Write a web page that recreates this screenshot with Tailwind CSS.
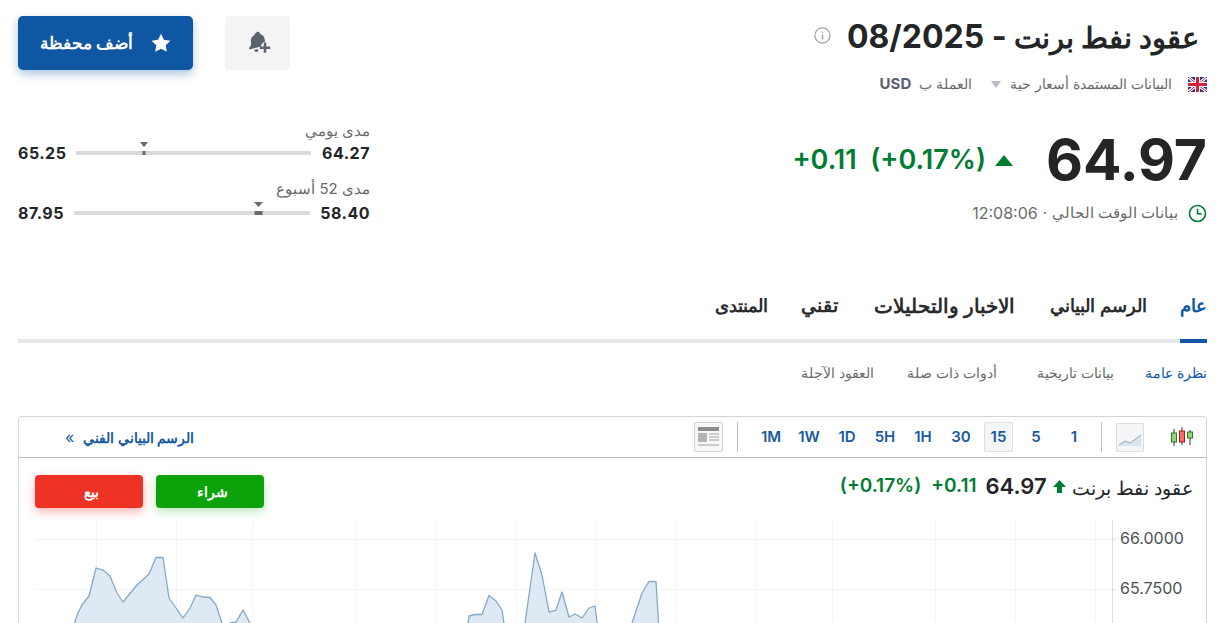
<!DOCTYPE html>
<html dir="rtl" lang="ar">
<head>
<meta charset="utf-8">
<script src="https://cdn.jsdelivr.net/npm/@tailwindcss/browser@4"></script>
</head>
<body class="bg-white">
<div class="h-[623px] overflow-hidden px-[16px] font-['Inter',sans-serif] text-[#232526]">

<div class="flex justify-between items-start pt-4 pr-[8px] pl-[2px]">
  <div class="flex flex-col items-start">
    <div class="flex items-center gap-[16px] h-[42px]">
      <h1 class="text-[32px] leading-[42px] font-bold whitespace-nowrap"><span class="text-[29px] font-bold">عقود نفط برنت</span> - 08/2025</h1>
      <svg class="w-[17px] h-[17px] mt-[-4px]" viewBox="0 0 17 17" fill="none" stroke="#9ca3af" stroke-width="1.2"><circle cx="8.5" cy="8.5" r="7.6"/><path d="M8.5 7.5v5M8.5 4.4v1.4" stroke-width="1.5"/></svg>
    </div>
    <div class="flex items-center mt-[17px] mr-[-8px] text-[14px] leading-[18px] text-[#6a6a6a] h-[18px]">
      <svg class="w-[19px] h-[15px]" viewBox="0 0 19 15"><rect width="19" height="15" fill="#27397c"/><path d="M0 0L19 15M19 0L0 15" stroke="#fff" stroke-width="3"/><path d="M0 0L19 15M19 0L0 15" stroke="#d4213d" stroke-width="1"/><path d="M9.5 0v15M0 7.5h19" stroke="#fff" stroke-width="5"/><path d="M9.5 0v15M0 7.5h19" stroke="#d4213d" stroke-width="3"/></svg>
      <span class="mr-[16px]">البيانات المستمدة أسعار حية</span>
      <svg class="w-[10px] h-[7px] mr-[9px]" viewBox="0 0 10 7"><path d="M0 0h10L5 7z" fill="#b8bcc4"/></svg>
      <span class="mr-[19px]">العملة ب</span>
      <span class="mr-[8px] font-bold text-[15px] text-[#5b616e]">USD</span>
    </div>
  </div>
  <div class="flex gap-[32px] flex-row">
    <div class="w-[65px] h-[54px] rounded-[4px] bg-[#f4f4f5] flex items-center justify-center">
      <svg class="w-[24px] h-[24px] ml-[3px]" viewBox="0 0 22 22" fill="#5b616e"><path d="M9.6 0.8c1-.3 1.9.3 2.2 1.2l.2.8c2.4.5 3.7 2.3 4.1 4.2l.6 2.6c-1.8.4-3.3 1.9-3.7 3.8l-.1.8-9.9 2.5c-.9.2-1.5-.8-.9-1.5 1.4-1.4 2-3 1.5-5.1C3 7.600 4.300 4.800 7 3.600l-.2-.7c.8-.9 1.800-1.700 2.800-2.100zM6.500 17.500l3.800-1c.3 1.100-.3 2.300-1.400 2.600-1.100.3-2.100-.4-2.400-1.600z"/><path d="M16.500 10.500v9.500M11.800 15.300h9.500" stroke="#5b616e" stroke-width="2.300" fill="none"/></svg>
    </div>
    <div class="w-[175px] h-[54px] rounded-[5px] bg-[#0f56a3] text-white flex items-center justify-center gap-[18px] shadow-[0_4px_10px_rgba(15,86,163,0.35)] text-[16.5px] font-bold">
      <svg class="w-[20px] h-[20px]" viewBox="0 0 20 20" fill="#fff"><path d="M10 .8l2.900 6 6.500.9-4.700 4.600 1.100 6.500L10 15.700l-5.800 3.100 1.100-6.500L.6 7.700l6.500-.9z"/></svg>
      <span>أضف محفظة</span>
    </div>
  </div>
</div>

<div class="flex justify-between items-start mt-[37px] pl-[2px]">
  <div class="flex flex-col items-start">
    <div class="flex items-center h-[60px] gap-[12px]">
      <span dir="ltr" class="text-[57px] leading-[60px] font-bold">64.97</span>
      <svg class="w-[18px] h-[11px] mr-[21px]" viewBox="0 0 18 11"><path d="M9 0l9 11H0z" fill="#007c32"/></svg>
      <span dir="ltr" class="text-[27px] leading-[30px] font-semibold text-[#007c32] whitespace-pre mr-[-3px]">+0.11  (+0.17%)</span>
    </div>
    <div class="flex items-center gap-[10px] mt-[13px] text-[14.5px] leading-[20px] text-[#6a6a6a]">
      <svg class="w-[19px] h-[19px]" viewBox="0 0 19 19" fill="none" stroke="#007c32" stroke-width="1.600"><circle cx="9.500" cy="9.500" r="8"/><path d="M9.500 4.800v5h4.200"/></svg>
      <div class="flex items-center gap-[5px]"><span>بيانات الوقت الحالي</span><span>·</span><span dir="ltr" class="text-[16px]">12:08:06</span></div>
    </div>
  </div>
  <div class="w-[352px] flex flex-col mt-[-8px] text-[16px]">
    <div class="text-[15px] leading-[18px] text-[#6a6a6a]">مدى يومي</div>
    <div class="flex items-center h-[22px] mt-[2px]">
      <span class="font-bold tracking-[0.5px] w-[48px]">64.27</span>
      <div class="relative w-[235px] h-[4px] bg-[#d9dadd] mr-[11px]">
        <svg class="absolute top-[-9px] left-[64px] w-[8px] h-[13px]" viewBox="0 0 8 13"><path d="M0 0h8L4 5z" fill="#6a6a6a"/><rect x="2.500" y="9" width="3" height="4" fill="#6a6a6a"/></svg>
      </div>
      <span class="font-bold tracking-[0.5px] mr-auto">65.25</span>
    </div>
    <div class="text-[15px] leading-[18px] text-[#6a6a6a] mt-[16px]">مدى 52 أسبوع</div>
    <div class="flex items-center h-[22px] mt-[4px]">
      <span class="font-bold tracking-[0.5px] w-[49px]">58.40</span>
      <div class="relative w-[236px] h-[4px] bg-[#d9dadd] mr-[11px]">
        <svg class="absolute top-[-9px] left-[180px] w-[9px] h-[13px]" viewBox="0 0 9 13"><path d="M0 0h9L4.500 5z" fill="#6a6a6a"/><rect x="0.500" y="9" width="8" height="4" fill="#6a6a6a"/></svg>
      </div>
      <span class="font-bold tracking-[0.5px] mr-auto">87.95</span>
    </div>
  </div>
</div>

<div class="mt-[59px] w-[1189px]">
  <div class="flex gap-[33px] h-[60px] border-b-4 border-[#e6e9eb] text-[18px] leading-[28px] font-semibold text-[#2a2c2e]">
    <div class="relative pt-[9px] text-[#0f56a3]">عام<div class="absolute bottom-[-4px] inset-x-0 h-[4px] bg-[#0f56a3]"></div></div>
    <div class="pt-[9px]">الرسم البياني</div>
    <div class="pt-[9px] mr-[2px] text-[20px]">الاخبار والتحليلات</div>
    <div class="pt-[9px] mr-[3px] text-[19px]">تقني</div>
    <div class="pt-[9px]">المنتدى</div>
  </div>
  <div class="flex mt-[18px] text-[14px] leading-[24px] text-[#6a6a6a]">
    <div class="text-[#0f56a3]">نظرة عامة</div>
    <div class="mr-[31px]">بيانات تاريخية</div>
    <div class="mr-[40px]">أدوات ذات صلة</div>
    <div class="mr-[33px]">العقود الآجلة</div>
  </div>

  <div class="mt-[31px] border border-[#d1d5db] rounded-t-[4px] overflow-hidden">
    <div class="h-[41px] border-b border-[#b9bcc0] flex items-center justify-between">
      <div class="flex items-center pr-[13px]">
        <svg class="w-[24px] h-[24px]" viewBox="0 0 24 24" fill="none"><path d="M5 4v17M13 2v18M21 5v15" stroke="#333"/><rect x="2.500" y="8" width="5" height="9" fill="#8fd67f" stroke="#2a7a22"/><rect x="10.500" y="6" width="5" height="11" fill="#f96b6b" stroke="#b01a1a"/><rect x="18.500" y="7" width="5" height="6" fill="#8fd67f" stroke="#2a7a22"/></svg>
        <div class="w-[28px] h-[29px] mr-[25px] rounded-[2px] border border-[#dcdee0] bg-[#f4f5f6] flex items-end">
          <svg class="w-[26px] h-[27px]" viewBox="0 0 26 27"><path d="M2 21l6-4 5 2 11-8v11H2z" fill="#d9e4ef"/><path d="M2 21l6-4 5 2 11-8" fill="none" stroke="#9aa7b3"/></svg>
        </div>
        <div class="w-px h-[30px] bg-[#b9bcc0] mr-[14px]"></div>
        <div dir="ltr" class="flex items-center text-[15px] font-semibold text-[#1a5a9f] mr-[8px]">
          <span class="w-[38px] text-center">1M</span><span class="w-[38px] text-center">1W</span><span class="w-[38px] text-center">1D</span><span class="w-[38px] text-center">5H</span><span class="w-[38px] text-center">1H</span><span class="w-[38px] text-center">30</span><span class="w-[29px] h-[30px] mx-[4px] leading-[28px] text-center rounded-[2px] border border-[#dcdee0] bg-[#f4f5f6]">15</span><span class="w-[38px] text-center">5</span><span class="w-[38px] text-center">1</span>
        </div>
        <div class="w-px h-[30px] bg-[#b9bcc0] mr-[14px]"></div>
        <div class="w-[29px] h-[30px] mr-[14px] rounded-[2px] border border-[#cfd1d4] bg-[#f7f7f7] flex items-center justify-center">
          <svg class="w-[23px] h-[22px]" viewBox="0 0 23 22" fill="#8d8d8d"><rect x="1" y="1" width="21" height="4"/><rect x="1" y="7" width="9" height="9" fill="#b4b4b4"/><path d="M12 8h10M12 11h10M12 14h10M1 19h21" stroke="#a0a0a0" fill="none"/></svg>
        </div>
      </div>
      <div class="flex items-center gap-[9px] pl-[46px] text-[14px] font-semibold text-[#1a5a9f]">
        <span>الرسم البياني الفني</span><span class="text-[16px] font-normal">»</span>
      </div>
    </div>
    <div class="flex justify-between items-start h-[62px] pt-[17px] pr-[13px] pl-[16px]">
      <div class="flex items-center h-[24px] gap-[6px] mt-[-1px]">
        <span class="text-[18.500px] leading-[24px] mt-[4px]">عقود نفط برنت</span>
        <svg class="w-[13px] h-[13px]" viewBox="0 0 13 13"><path d="M6.500 0l6.500 7H9v6H4V7H0z" fill="#007c32"/></svg>
        <span dir="ltr" class="text-[22px] font-semibold">64.97</span>
        <span dir="ltr" class="text-[19px] font-semibold text-[#007c32] mr-[3px]">+0.11</span>
        <span dir="ltr" class="text-[19px] font-semibold text-[#007c32] mr-[4px]">(+0.17%)</span>
      </div>
      <div class="flex gap-[13px]">
        <div class="w-[108px] h-[33px] rounded-[4px] bg-[#0ca30a] text-white text-[14px] font-bold flex items-center justify-center pl-[5px] shadow-[0_4px_10px_rgba(12,163,10,0.25)]">شراء</div>
        <div class="w-[108px] h-[33px] rounded-[4px] bg-[#ee3224] text-white text-[14px] font-bold flex items-center justify-center pl-[5px] shadow-[0_4px_10px_rgba(238,50,36,0.35)]">بيع</div>
      </div>
    </div>
    <svg class="block [direction:ltr]" width="1187" height="120" viewBox="19 520 1187 120">
      <g stroke="#f3f4f5" fill="none">
        <path d="M35 539.500H1112M35 589.500H1112"/>
        <path d="M96.500 520V640M176.500 520V640M252.500 520V640M356.500 520V640M436.500 520V640M516.500 520V640M595.500 520V640M675.500 520V640M755.500 520V640M832.500 520V640M935.500 520V640M1015.500 520V640M1095.500 520V640"/>
      </g>
      <path d="M1112.500 520V640" stroke="#dcdee0" fill="none"/>
      <path d="M1112 539.500h4M1112 589.500h4" stroke="#dcdee0" fill="none"/>
      <g fill="#dfe9f3" stroke="#84a9c9" stroke-width="1.300" stroke-linejoin="round">
        <path d="M74 630L75 622L77 615L82 605L89 596L96 568L103 570L110 576L117 593L123 602L137 585L149 574L156 557.500L163 557.500L169 598L183 618L190 608L196 595L203 597L210 597.500L216 605L222 623L224 630Z"/>
        <path d="M228 630L230 623L236 622L243 610L250 623L254 630Z"/>
        <path d="M467 630L469 616L475 614.500L482 614.500L489 595.500L496 601L502 610L505 630Z"/>
        <path d="M524 630L535 553L542 575L549 612L556 610L562 592L569 617L575 614L582 618L589 608L595 606L598 630Z"/>
        <path d="M629 630L632 623L642 593L649 581.500L656 581.500L659 630Z"/>
      </g>
      <text x="1120" y="544" font-size="16" fill="#4b4f56">66.0000</text>
      <text x="1120" y="594" font-size="16" fill="#4b4f56">65.7500</text>
    </svg>
  </div>
</div>
</div>
</body>
</html>
